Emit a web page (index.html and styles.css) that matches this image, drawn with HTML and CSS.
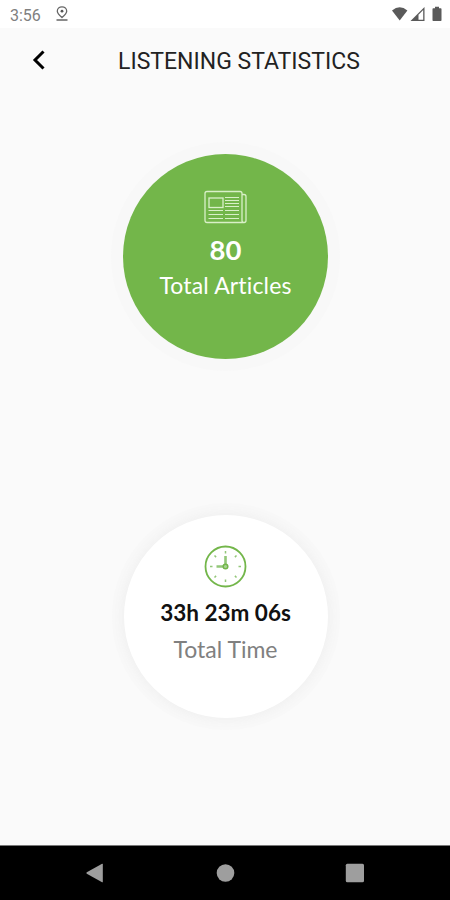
FILE: index.html
```html
<!DOCTYPE html>
<html lang="en">
  <head>
    <meta charset="UTF-8">
    <title>Listening Statistics</title>
    <meta name="viewport" content="width=device-width, initial-scale=1.0">
    <link rel="stylesheet" href="styles.css">
  </head>
  <body>
    <div class="status-bar">
      <span class="status-time">3:56</span>
      <svg class="status-pin" width="14" height="16" viewBox="0 0 14 16">
        <path d="M7 11.6C4 8.9 2.3 7.2 2.3 5.2a4.7 4.4 0 0 1 9.4 0C11.7 7.2 10 8.9 7 11.6zM1.5 14h11" fill="none" stroke="#666" stroke-width="1.3"/>
        <circle cx="7" cy="5.2" r="1.4" fill="#555"/>
      </svg>
      <svg class="status-icons" width="52" height="18" viewBox="0 0 52 18">
        <path d="M0 5.5Q7.7-.8 15.4 5.5L7.7 15.5z" fill="#5a5a5a"/>
        <path d="M18.500 16L32.500 2v14z" fill="#5a5a5a"/>
        <path d="M26.500 9.800l4.700-4.700v9.600h-4.700z" fill="#fff"/>
        <path d="M41.300 3.300h1.700V1.800h4v1.500h1.700q.8 0 .8.800v11.200q0 .8-.8.800h-7.400q-.8 0-.8-.8V4.100q0-.8.800-.8z" fill="#5a5a5a"/>
      </svg>
    </div>
    <header class="header">
      <svg class="back" width="14" height="22" viewBox="0 0 14 22">
        <path d="M11.500 2.500L3 11l8.500 8.500" fill="none" stroke="#000" stroke-width="3"/>
      </svg>
      <h1 class="title">LISTENING STATISTICS</h1>
    </header>
    <main class="stats">
      <section class="stat stat-articles">
        <svg class="stat-icon" width="44" height="34" viewBox="0.5 0 44 34" fill="none" stroke="#d9f0c8" stroke-width="1.3">
          <path d="M3.5 1.5h33q2 0 2 2v27q0 2 2 2h-37q-2 0-2-2v-27q0-2 2-2zM38.5 4.5h2q2 0 2 2v24q0 2-2 2"/>
          <rect x="5.500" y="8" width="14" height="9.500"/>
          <path d="M21.500 7.500h14M21.500 10.500h14M21.500 13.500h14M21.500 16.500h14M5 20.500h14.500M21.500 20.500h14M5 24.500h14.500M21.500 24.500h14M5 28.500h14.500M21.500 28.500h14" stroke-width="1.1"/>
        </svg>
        <p class="stat-value">80</p>
        <p class="stat-label">Total Articles</p>
      </section>
      <section class="stat stat-time">
        <svg class="stat-icon" width="44" height="44" viewBox="0.5 -0.5 44 44" fill="none" stroke="#73b64a">
          <circle cx="22" cy="22" r="20" stroke-width="1.8"/>
          <path d="M22 6.500v2.500M22 35v2.500M6.500 22H9M35 22h2.500M11 11l1.600 1.600M31.400 31.400L33 33M33 11l-1.600 1.600M12.600 31.400L11 33" stroke="#93c779" stroke-width="1.5"/>
          <path d="M22 20v-8.500M20 22h-7" stroke="#93c779" stroke-width="2.6"/>
          <circle cx="22" cy="22" r="2.3" fill="#a9d394" stroke-width="1.5"/>
        </svg>
        <p class="stat-value">33h 23m 06s</p>
        <p class="stat-label">Total Time</p>
      </section>
    </main>
    <nav class="nav-bar">
      <svg width="20" height="20" viewBox="0 0 20 20"><path d="M1.800 9.300L17.100.8q.7-.3.700.5v17.400q0 .8-.7.500L1.800 10.700q-1-.7 0-1.400z" fill="#9e9e9e"/></svg>
      <svg width="20" height="20" viewBox="0 0 20 20"><circle cx="10.500" cy="10" r="8.800" fill="#9e9e9e"/></svg>
      <svg width="20" height="20" viewBox="0 0 20 20"><rect x="0.800" y="0.800" width="18.200" height="18.500" rx="1.500" fill="#9e9e9e"/></svg>
    </nav>
  </body>
</html>
```

FILE: styles.css
```css
* {
    box-sizing: border-box;
}

body {
    margin: 0;
    height: 900px;
    display: flex;
    flex-direction: column;
    overflow: hidden;
    font-family: Lato, sans-serif;
    background-color: #fafafa;
}

.status-bar {
    height: 28px;
    display: flex;
    align-items: center;
    padding: 0 6px 0 10px;
    background-color: #fff;
}

.status-time {
    width: 45px;
    padding-top: 2px;
    font-family: Roboto, sans-serif;
    font-size: 16px;
    color: #808080;
}

.status-icons {
    margin-left: auto;
}

.header {
    height: 64px;
    display: flex;
    align-items: center;
    padding-left: 32px;
}

.title {
    margin: 4px 0 0 72px;
    font-family: Roboto, sans-serif;
    font-size: 23px;
    font-weight: 400;
    line-height: 28px;
    white-space: nowrap;
    color: #222;
}

.stats {
    flex: 1;
    display: flex;
    flex-direction: column;
    align-items: center;
    gap: 156px;
    padding: 62px 0 0 1px;
}

.stat {
    width: 205px;
    height: 205px;
    flex-shrink: 0;
    display: flex;
    flex-direction: column;
    align-items: center;
    border-radius: 50%;
    font-variant-ligatures: none;
    white-space: nowrap;
}

.stat p {
    margin: 0;
}

.stat-articles {
    padding-top: 36px;
    background-color: #73b64a;
    color: #fff;
    box-shadow: 0 0 0 12px #f8f8f8;
}

.stat-articles .stat-value {
    padding-top: 9px;
    font-size: 27.5px;
    font-weight: 700;
    line-height: 34px;
}

.stat-label {
    font-size: 23px;
    line-height: 30px;
}

.stat-articles .stat-label {
    padding-top: 3px;
    letter-spacing: 0.15px;
}

.stat-time {
    width: 204px;
    height: 203px;
    padding-top: 29px;
    background-color: #fff;
    box-shadow: 0 0 9px 3px #f1f1f1, 0 0 0 12px #f8f8f8;
}

.stat-time .stat-value {
    padding-top: 10px;
    font-size: 22.5px;
    font-weight: 700;
    line-height: 30px;
    color: #111;
}

.stat-time .stat-label {
    padding-top: 6px;
    color: #808080;
}

.nav-bar {
    height: 55px;
    display: flex;
    align-items: center;
    justify-content: space-between;
    padding: 0 85px;
    border-top: 1px solid #777;
    background-color: #000;
}
```
